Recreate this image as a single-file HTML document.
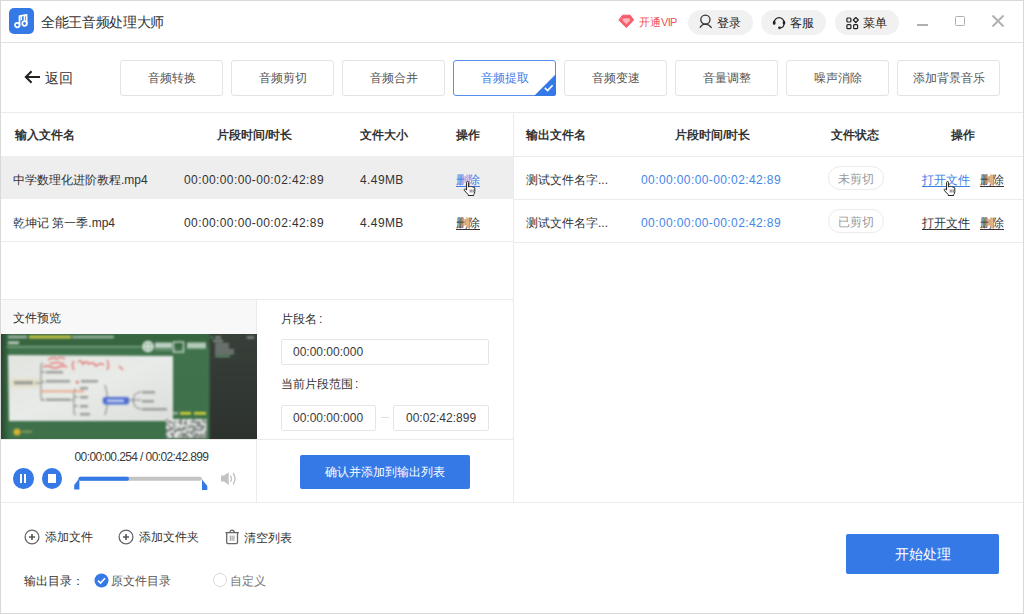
<!DOCTYPE html>
<html><head><meta charset="utf-8">
<style>
*{box-sizing:border-box;margin:0;padding:0}
html,body{width:1024px;height:614px;overflow:hidden;background:#fff}
body{font-family:"Liberation Sans",sans-serif;color:#333;position:relative}
.a{position:absolute}
.t{position:absolute;white-space:nowrap;line-height:16px}
.hl{position:absolute;height:1px;background:#ebebeb}
.vl{position:absolute;width:1px;background:#ebebeb}
.tab{position:absolute;top:60px;width:103px;height:36px;border:1px solid #e3e3e3;border-radius:3px;font-size:12px;color:#555;text-align:center;line-height:35px}
.pill{position:absolute;top:10px;height:25px;border-radius:13px;background:#f1f1f1}
.th{font-weight:bold;font-size:12px;color:#333}
.td{font-size:12px;color:#333}
.inp{position:absolute;height:26px;border:1px solid #e6e6e6;border-radius:2px;font-size:12px;color:#3a3a3a;line-height:25px}
.u{text-decoration:underline;text-underline-offset:2px}
</style></head><body>
<!-- window border -->
<div class="a" style="left:0;top:0;width:1024px;height:614px;border:1px solid #d9d9d9"></div>

<!-- ===== title bar ===== -->
<div class="a" style="left:8.5px;top:8px;width:25.5px;height:26px;border-radius:5px;background:#3579e7"></div>
<svg class="a" style="left:8.5px;top:8px" width="26" height="26" viewBox="0 0 26 26">
  <g fill="none" stroke="#fff" stroke-width="1.7" stroke-linejoin="round">
    <circle cx="8.3" cy="17.1" r="2.3"/>
    <circle cx="15.6" cy="15.5" r="2.3"/>
    <path d="M10.5 17.1V8L17.6 6.8V15.5"/>
    <path d="M12.3 7.7V12.2M15.4 7.2V12.2" stroke-width="1.5"/>
  </g>
</svg>
<div class="t" style="left:41px;top:13.5px;font-size:14px;letter-spacing:-0.35px;color:#333">全能王音频处理大师</div>

<!-- VIP -->
<svg class="a" style="left:618px;top:14px" width="17" height="15" viewBox="0 0 17 15">
  <path d="M4.5 1.2H12.2L15.6 6L8.3 13.6L0.8 6Z" fill="#f65c6c" stroke="#f65c6c" stroke-width="1" stroke-linejoin="round"/>
  <path d="M5.6 4.6H11.2L12.1 6.3L8.4 9.9L4.6 6.3Z" fill="#fdb8c0" stroke="#fca9b2" stroke-width="0.6" stroke-linejoin="round"/>
  <path d="M3.6 3.6L2.6 4.8" stroke="#ffd0d5" stroke-width="0.8"/>
</svg>
<div class="t" style="left:639px;top:14px;font-size:11px;color:#f0525a">开通<span style="letter-spacing:-0.7px">VIP</span></div>

<div class="pill" style="left:688px;width:65px"></div>
<svg class="a" style="left:699px;top:14px" width="15" height="15" viewBox="0 0 15 15">
  <g fill="none" stroke="#333" stroke-width="1.25">
    <circle cx="6.4" cy="5.6" r="4.6"/>
    <path d="M0.9 13.8C2.4 11 4.3 10.1 6.4 10.1S10.5 11 12.6 13.8"/>
  </g>
</svg>
<div class="t" style="left:717px;top:15px;font-size:12px;color:#222">登录</div>

<div class="pill" style="left:761px;width:65px"></div>
<svg class="a" style="left:772px;top:16px" width="14" height="14" viewBox="0 0 14 14">
  <path d="M2.2 6.6A4.9 4.9 0 0 1 12 6.6" fill="none" stroke="#222" stroke-width="1.3"/>
  <rect x="0.9" y="4.7" width="2.6" height="4" rx="1.2" fill="#222"/>
  <rect x="10.8" y="4.7" width="2.4" height="4" rx="1.2" fill="#222"/>
  <path d="M11.9 8.2Q11.7 11.5 8.2 11.8" fill="none" stroke="#222" stroke-width="1.2"/>
  <circle cx="7.5" cy="11.8" r="1.35" fill="#222"/>
</svg>
<div class="t" style="left:790px;top:15px;font-size:12px;color:#222">客服</div>

<div class="pill" style="left:835px;width:64px"></div>
<svg class="a" style="left:846px;top:17px" width="13" height="13" viewBox="0 0 13 13">
  <g fill="none" stroke="#222" stroke-width="1.2">
    <rect x="0.9" y="1" width="4" height="4" rx="0.9"/>
    <path d="M9.8 0.5L12.3 3L9.8 5.5L7.3 3Z" stroke-linejoin="round"/>
    <rect x="0.9" y="7.7" width="4" height="4" rx="0.9"/>
    <rect x="7.6" y="7.7" width="4" height="4" rx="0.9"/>
  </g>
</svg>
<div class="t" style="left:863px;top:15px;font-size:12px;color:#222">菜单</div>

<!-- window controls -->
<div class="a" style="left:917px;top:23.5px;width:11px;height:2px;background:#b0b0b0"></div>
<div class="a" style="left:955px;top:15.5px;width:10px;height:10px;border:1.8px solid #b0b0b0;border-radius:1.5px"></div>
<svg class="a" style="left:991px;top:14px" width="14" height="14" viewBox="0 0 14 14">
  <path d="M1.5 1.5L12.5 12.5M12.5 1.5L1.5 12.5" stroke="#b0b0b0" stroke-width="1.9"/>
</svg>

<div class="hl" style="left:1px;top:42px;width:1022px;background:#e2e2e2"></div>

<!-- ===== toolbar ===== -->
<svg class="a" style="left:24px;top:70px" width="17" height="14" viewBox="0 0 17 14">
  <path d="M16 7H2.2M7.6 1.2L1.8 7L7.6 12.8" fill="none" stroke="#222" stroke-width="2"/>
</svg>
<div class="t" style="left:45px;top:70px;font-size:14px;color:#333">返回</div>

<div class="tab" style="left:120px">音频转换</div>
<div class="tab" style="left:231px">音频剪切</div>
<div class="tab" style="left:342px">音频合并</div>
<div class="tab" style="left:453px;border-color:#5a8eee;color:#3f7de6">音频提取
  <svg class="a" style="right:-1px;bottom:-1px" width="22" height="22" viewBox="0 0 22 22"><path d="M22 0V19.5Q22 22 19.5 22H0Z" fill="#3579e7"/><path d="M10.8 13.9L13.6 16.5L18.6 11.2" fill="none" stroke="#fff" stroke-width="1.6"/></svg>
</div>
<div class="tab" style="left:564px">音频变速</div>
<div class="tab" style="left:675px">音量调整</div>
<div class="tab" style="left:786px">噪声消除</div>
<div class="tab" style="left:897px">添加背景音乐</div>

<div class="hl" style="left:1px;top:112px;width:1022px"></div>

<!-- ===== left table ===== -->
<div class="a" style="left:1px;top:156px;width:512px;height:43px;background:#eeeeee"></div>
<div class="t th" style="left:15px;top:127px">输入文件名</div>
<div class="t th" style="left:217px;top:127px">片段时间/时长</div>
<div class="t th" style="left:360px;top:127px">文件大小</div>
<div class="t th" style="left:456px;top:127px">操作</div>

<div class="t td" style="left:13px;top:171.5px">中学数理化进阶教程.mp4</div>
<div class="t td" style="left:184px;top:171.5px;letter-spacing:0.4px">00:00:00:00-00:02:42:89</div>
<div class="t td" style="left:360px;top:171.5px;letter-spacing:0.4px">4.49MB</div>
<div class="t td u" style="left:456px;top:171.5px;color:#3f7de6">删除</div>

<div class="t td" style="left:13px;top:214.5px">乾坤记 第一季.mp4</div>
<div class="t td" style="left:184px;top:214.5px;letter-spacing:0.4px">00:00:00:00-00:02:42:89</div>
<div class="t td" style="left:360px;top:214.5px;letter-spacing:0.4px">4.49MB</div>
<div class="t td u" style="left:456px;top:214.5px">删除</div>

<div class="hl" style="left:1px;top:241px;width:512px"></div>

<!-- preview -->
<div class="hl" style="left:1px;top:299px;width:512px"></div>
<div class="a" style="left:1px;top:300px;width:255px;height:34px;background:#f8f8f8"></div>
<div class="t" style="left:13px;top:310px;font-size:12px;color:#333">文件预览</div>

<!-- video thumbnail -->
<div class="a" style="left:1px;top:334px;width:256px;height:105px;overflow:hidden;z-index:2"><svg style="display:block;filter:blur(0.9px);margin:-2px" width="260" height="109" viewBox="-2 -2 260 109">
  <defs>
    <filter id="bl" x="-5%" y="-5%" width="110%" height="110%"><feGaussianBlur stdDeviation="0.75"/></filter>
    <linearGradient id="gg" x1="0" y1="0" x2="0" y2="1"><stop offset="0" stop-color="#41744c"/><stop offset="1" stop-color="#3e7049"/></linearGradient>
    <linearGradient id="gl" x1="0" y1="0" x2="1" y2="0"><stop offset="0" stop-color="#22372a"/><stop offset="1" stop-color="#3a6f44"/></linearGradient>
    <linearGradient id="wb" x1="0" y1="0" x2="1" y2="1"><stop offset="0" stop-color="#e2e4e0"/><stop offset="0.5" stop-color="#e9ebe8"/><stop offset="1" stop-color="#dcdedb"/></linearGradient>
    <linearGradient id="dk" x1="0" y1="0" x2="0" y2="1"><stop offset="0" stop-color="#38403a"/><stop offset="1" stop-color="#2c312d"/></linearGradient>
    <pattern id="qr" width="3" height="3" patternUnits="userSpaceOnUse"><rect width="3" height="3" fill="#c9cbc9"/><rect width="1.5" height="1.5" fill="#5a5f5b"/><rect x="1.5" y="1.5" width="1.5" height="1.5" fill="#7d817e"/></pattern>
  </defs>
  <g>
    <rect x="-3" y="-3" width="262" height="112" fill="url(#gg)"/>
    <rect x="0" y="0" width="208" height="13" fill="#36653f"/>
    <rect x="-3" y="-3" width="11" height="112" fill="url(#gl)"/>
    <rect x="6" y="12.3" width="134" height="1" fill="#a9c9b0"/>
    <rect x="7" y="1.8" width="19" height="2.4" fill="#a9bfae"/>
    <rect x="28" y="1.6" width="42" height="2.8" fill="#cfcb49"/>
    <rect x="71" y="1.8" width="42" height="2.4" fill="#a3bba8"/>
    <rect x="7" y="7.5" width="11" height="2.6" fill="#c5d4c8"/>
    <circle cx="147" cy="12.5" r="5" fill="#8fb297" stroke="#e6efe8" stroke-width="1.6"/><path d="M142 12.5H152M147 7.5V17.5" stroke="#e6efe8" stroke-width="1.3"/>
    <rect x="154" y="8.5" width="17" height="5.5" fill="#d5e2d8" opacity=".85"/>
    <rect x="154" y="15" width="17" height="1.5" fill="#a7bfab" opacity=".6"/>
    <rect x="172.5" y="8" width="10" height="10" fill="none" stroke="#d5e2d8" stroke-width="1.3"/>
    <rect x="186" y="8.5" width="19" height="6" fill="#d5e2d8" opacity=".8"/>
    <path d="M7 21L172 22L172 87L8 87Z" fill="url(#wb)"/>
    <rect x="9" y="44" width="29" height="10" fill="#e4e0c8" opacity=".8"/>
    <rect x="13" y="47" width="19" height="3.5" fill="#9a9c98"/>
    <g fill="none" stroke="#6f736f" stroke-width="0.9">
      <path d="M34 49H40M42 29Q40 29 40 31V64Q40 66 42 66M40 38H44M40 48H44M40 66H44"/>
      <path d="M60 66H72M75 55Q73 55 73 57V79Q73 81 75 81M73 63H77M73 72H77"/>
      <path d="M104 51Q109 66 104 81M101 66H102"/>
      <path d="M128 66H133M140 58Q133 58 132 66Q133 75 140 75M133 66H140"/>
    </g>
    <g fill="#9c9e9a">
      <rect x="45" y="37" width="17" height="2.5"/><rect x="45" y="46" width="24" height="2.5"/>
      <rect x="80" y="46" width="17" height="2.5"/>
      <rect x="45" y="64.5" width="24" height="2.5"/>
      <rect x="79" y="53" width="8" height="2.5"/><rect x="79" y="62" width="8" height="2.5"/><rect x="79" y="71" width="8" height="2.5"/><rect x="79" y="79" width="10" height="2.5"/>
      <rect x="141" y="57" width="13" height="2.5"/><rect x="141" y="66" width="12" height="2.5"/><rect x="141" y="74" width="25" height="2.5"/>
    </g>
    <rect x="75" y="47" width="2.5" height="2.5" fill="#e06a6a"/>
    <rect x="40" y="56.2" width="43" height="2.2" fill="#e8a27f" opacity=".8"/>
    <g fill="none" stroke="#e45c5c" stroke-width="1.4" opacity=".85">
      <path d="M47 26Q52 22 56 25Q60 22 64 25M49 30Q55 27 63 30"/>
      <path d="M42 33Q46 31 50 33T58 33T66 33"/>
      <path d="M73 27Q70 31 73 36M77 28Q80 25 82 30Q85 26 88 30Q92 27 95 32Q99 28 103 31M106 26Q109 31 106 36"/>
      <path d="M118 32L122 36"/>
    </g>
    <rect x="102" y="63" width="26" height="7.5" rx="2" fill="#4f6fd0"/>
    <rect x="106" y="65.5" width="17" height="2.5" fill="#c8d2f2"/>
    <rect x="208.5" y="-3" width="50" height="112" fill="url(#dk)"/>
    <g fill="#aab3ad" opacity=".8">
      <rect x="210" y="2.5" width="2" height="2" fill="#5dbf6d"/><rect x="214" y="2.5" width="6" height="2"/>
      <rect x="212" y="6" width="10" height="1.8"/>
      <rect x="214" y="9.5" width="14" height="1.6"/><rect x="214" y="12.5" width="14" height="1.6"/>
      <rect x="214" y="15.5" width="19" height="1.6"/><rect x="214" y="18.5" width="19" height="1.6"/>
      <rect x="214" y="21.5" width="15" height="1.6" fill="#78b98a"/>
      <rect x="246" y="2.5" width="7" height="2"/>
    </g>
    <rect x="208.5" y="23.5" width="46.5" height="0.8" fill="#3d4640"/>
    <rect x="165" y="85" width="20" height="19" fill="#e2e4e2"/><g fill="#7d817e"><rect x="165" y="85" width="2" height="2"/><rect x="165" y="89" width="2" height="2"/><rect x="165" y="95" width="2" height="2"/><rect x="165" y="97" width="2" height="2"/><rect x="165" y="101" width="2" height="2"/><rect x="165" y="103" width="2" height="2"/><rect x="167" y="87" width="2" height="2"/><rect x="167" y="91" width="2" height="2"/><rect x="167" y="95" width="2" height="2"/><rect x="169" y="87" width="2" height="2"/><rect x="169" y="93" width="2" height="2"/><rect x="169" y="95" width="2" height="2"/><rect x="169" y="99" width="2" height="2"/><rect x="171" y="89" width="2" height="2"/><rect x="171" y="93" width="2" height="2"/><rect x="171" y="99" width="2" height="2"/><rect x="171" y="101" width="2" height="2"/><rect x="171" y="103" width="2" height="2"/><rect x="173" y="87" width="2" height="2"/><rect x="173" y="91" width="2" height="2"/><rect x="173" y="95" width="2" height="2"/><rect x="173" y="97" width="2" height="2"/><rect x="175" y="95" width="2" height="2"/><rect x="177" y="87" width="2" height="2"/><rect x="177" y="93" width="2" height="2"/><rect x="177" y="95" width="2" height="2"/><rect x="177" y="101" width="2" height="2"/><rect x="179" y="85" width="2" height="2"/><rect x="179" y="87" width="2" height="2"/><rect x="179" y="89" width="2" height="2"/><rect x="179" y="95" width="2" height="2"/><rect x="179" y="99" width="2" height="2"/><rect x="179" y="103" width="2" height="2"/><rect x="181" y="93" width="2" height="2"/><rect x="181" y="95" width="2" height="2"/><rect x="181" y="99" width="2" height="2"/><rect x="181" y="101" width="2" height="2"/><rect x="181" y="103" width="2" height="2"/><rect x="183" y="87" width="2" height="2"/><rect x="183" y="89" width="2" height="2"/><rect x="183" y="93" width="2" height="2"/><rect x="183" y="99" width="2" height="2"/><rect x="183" y="101" width="2" height="2"/></g>
    <rect x="185.5" y="85" width="20" height="19" fill="#e2e4e2"/><g fill="#7d817e"><rect x="185.5" y="97" width="2" height="2"/><rect x="185.5" y="101" width="2" height="2"/><rect x="185.5" y="103" width="2" height="2"/><rect x="187.5" y="91" width="2" height="2"/><rect x="187.5" y="93" width="2" height="2"/><rect x="187.5" y="97" width="2" height="2"/><rect x="187.5" y="103" width="2" height="2"/><rect x="189.5" y="87" width="2" height="2"/><rect x="189.5" y="91" width="2" height="2"/><rect x="189.5" y="97" width="2" height="2"/><rect x="189.5" y="99" width="2" height="2"/><rect x="191.5" y="85" width="2" height="2"/><rect x="191.5" y="87" width="2" height="2"/><rect x="191.5" y="91" width="2" height="2"/><rect x="191.5" y="93" width="2" height="2"/><rect x="191.5" y="95" width="2" height="2"/><rect x="191.5" y="97" width="2" height="2"/><rect x="191.5" y="101" width="2" height="2"/><rect x="191.5" y="103" width="2" height="2"/><rect x="193.5" y="87" width="2" height="2"/><rect x="193.5" y="93" width="2" height="2"/><rect x="193.5" y="95" width="2" height="2"/><rect x="193.5" y="99" width="2" height="2"/><rect x="193.5" y="101" width="2" height="2"/><rect x="193.5" y="103" width="2" height="2"/><rect x="195.5" y="87" width="2" height="2"/><rect x="195.5" y="89" width="2" height="2"/><rect x="195.5" y="91" width="2" height="2"/><rect x="195.5" y="95" width="2" height="2"/><rect x="195.5" y="99" width="2" height="2"/><rect x="195.5" y="101" width="2" height="2"/><rect x="197.5" y="87" width="2" height="2"/><rect x="197.5" y="89" width="2" height="2"/><rect x="197.5" y="91" width="2" height="2"/><rect x="197.5" y="95" width="2" height="2"/><rect x="197.5" y="101" width="2" height="2"/><rect x="197.5" y="103" width="2" height="2"/><rect x="199.5" y="91" width="2" height="2"/><rect x="199.5" y="93" width="2" height="2"/><rect x="199.5" y="95" width="2" height="2"/><rect x="199.5" y="99" width="2" height="2"/><rect x="199.5" y="101" width="2" height="2"/><rect x="199.5" y="103" width="2" height="2"/><rect x="201.5" y="85" width="2" height="2"/><rect x="201.5" y="87" width="2" height="2"/><rect x="201.5" y="91" width="2" height="2"/><rect x="201.5" y="93" width="2" height="2"/><rect x="201.5" y="101" width="2" height="2"/><rect x="203.5" y="87" width="2" height="2"/><rect x="203.5" y="97" width="2" height="2"/><rect x="203.5" y="99" width="2" height="2"/><rect x="203.5" y="101" width="2" height="2"/><rect x="203.5" y="103" width="2" height="2"/></g>
    <rect x="179" y="78" width="11" height="2.6" fill="#d6d43a"/>
    <rect x="193" y="78" width="12" height="2.6" fill="#d6d43a"/>
    <rect x="172" y="78" width="5" height="2.4" fill="#9fb7a4"/>
    <circle cx="16" cy="98" r="3.6" fill="#d6b232"/>
    <rect x="21" y="96.5" width="10" height="2.4" fill="#7f9a5a"/>
  </g>
</svg></div>
<!-- player controls -->
<div class="t" style="left:74.5px;top:448.5px;font-size:12px;color:#3a3a3a;letter-spacing:-0.6px">00:00:00.254 / 00:02:42.899</div>
<div class="a" style="left:13px;top:468px;width:20.5px;height:20.5px;border-radius:50%;background:#3579e7"></div>
<div class="a" style="left:19.5px;top:474px;width:2.6px;height:8.8px;background:#fff"></div>
<div class="a" style="left:23.9px;top:474px;width:2.6px;height:8.8px;background:#fff"></div>
<div class="a" style="left:42px;top:468px;width:20.2px;height:20.5px;border-radius:50%;background:#3579e7"></div>
<div class="a" style="left:47.8px;top:474px;width:8.6px;height:8.8px;background:#fff"></div>
<svg class="a" style="left:70px;top:470px" width="140" height="24" viewBox="0 0 140 24">
  <rect x="8.5" y="6.7" width="123.5" height="4" rx="2" fill="#c4c4c4"/>
  <rect x="8.5" y="6.7" width="50.5" height="4" rx="2" fill="#3579e7"/>
  <path d="M9.4 8.2L4.2 15V19.6H9.4Z" fill="#3579e7"/>
  <path d="M132 9.5L137.3 16V20H132Z" fill="#3579e7"/>
</svg>
<svg class="a" style="left:220px;top:471px" width="18" height="15" viewBox="0 0 18 15">
  <path d="M1 4.4H4L8.7 1.3V14L4 10.6H1Z" fill="#c2c2c2"/>
  <path d="M10.7 5Q12.2 7.6 10.7 10.2M13.4 2.3Q16.4 7.6 13.4 12.9" fill="none" stroke="#c2c2c2" stroke-width="1.4" stroke-linecap="round"/>
</svg>
<div class="vl" style="left:256px;top:299px;height:203px"></div>
<div class="hl" style="left:1px;top:439px;width:512px"></div>

<!-- form -->
<div class="t" style="left:281px;top:311px;font-size:12px;color:#333">片段名<span style="margin-left:2px">:</span></div>
<div class="inp" style="left:281px;top:339px;width:208px;padding-left:11px">00:00:00:000</div>
<div class="t" style="left:281px;top:376px;font-size:12px;color:#333">当前片段范围<span style="margin-left:2px">:</span></div>
<div class="inp" style="left:281px;top:405px;width:95px;padding-left:11px">00:00:00:000</div>
<div class="a" style="left:380.5px;top:417px;width:8.5px;height:1px;background:#dedede"></div>
<div class="inp" style="left:393px;top:405px;width:96px;padding-left:12px">00:02:42:899</div>

<div class="a" style="left:300px;top:455px;width:170px;height:34px;background:#3579e7;border-radius:2px;color:#fff;font-size:12px;text-align:center;line-height:34px">确认并添加到输出列表</div>

<div class="vl" style="left:513px;top:113px;height:389px"></div>

<!-- ===== right table ===== -->
<div class="t th" style="left:526px;top:127px">输出文件名</div>
<div class="t th" style="left:675px;top:127px">片段时间/时长</div>
<div class="t th" style="left:831px;top:127px">文件状态</div>
<div class="t th" style="left:951px;top:127px">操作</div>
<div class="hl" style="left:514px;top:156px;width:509px"></div>

<div class="t td" style="left:526px;top:171.5px">测试文件名字...</div>
<div class="t td" style="left:641px;top:171.5px;color:#4586e8;letter-spacing:0.4px">00:00:00:00-00:02:42:89</div>
<div class="a" style="left:828px;top:166px;width:56px;height:24px;border:1px solid #ebebeb;border-radius:12px;font-size:12px;color:#999;text-align:center;line-height:25px">未剪切</div>
<div class="t td u" style="left:922px;top:171.5px;color:#3f7de6">打开文件</div>
<div class="t td u" style="left:980px;top:171.5px">删除</div>
<div class="hl" style="left:514px;top:199px;width:509px"></div>

<div class="t td" style="left:526px;top:214.5px">测试文件名字...</div>
<div class="t td" style="left:641px;top:214.5px;color:#4586e8;letter-spacing:0.4px">00:00:00:00-00:02:42:89</div>
<div class="a" style="left:828px;top:209px;width:56px;height:24px;border:1px solid #ebebeb;border-radius:12px;font-size:12px;color:#999;text-align:center;line-height:25px">已剪切</div>
<div class="t td u" style="left:922px;top:214.5px">打开文件</div>
<div class="t td u" style="left:980px;top:214.5px">删除</div>
<div class="hl" style="left:514px;top:242px;width:509px"></div>

<svg class="a" style="left:463px;top:181px" width="14" height="15" viewBox="0 0 14 15"><path d="M3.6 1.6Q3.6 0.5 4.6 0.5Q5.6 0.5 5.6 1.6V6Q6.2 5.3 7.2 5.6Q7.6 5.2 8.6 5.6Q9.3 5.5 9.9 6.2Q11.2 5.8 11.8 6.9V10.6Q11.8 12.4 10.7 13.5V14.5H5.2V13.6Q3.7 12.2 1.5 9.6Q0.7 8.6 1.6 8.1Q2.4 7.7 3.6 9Z" fill="#fff" stroke="#222" stroke-width="1"/><path d="M7.2 8.5V11.5M8.8 8.5V11.5M10.3 8.5V11.5" stroke="#444" stroke-width="0.7"/></svg>
<svg class="a" style="left:943px;top:181px" width="14" height="15" viewBox="0 0 14 15"><path d="M3.6 1.6Q3.6 0.5 4.6 0.5Q5.6 0.5 5.6 1.6V6Q6.2 5.3 7.2 5.6Q7.6 5.2 8.6 5.6Q9.3 5.5 9.9 6.2Q11.2 5.8 11.8 6.9V10.6Q11.8 12.4 10.7 13.5V14.5H5.2V13.6Q3.7 12.2 1.5 9.6Q0.7 8.6 1.6 8.1Q2.4 7.7 3.6 9Z" fill="#fff" stroke="#222" stroke-width="1"/><path d="M7.2 8.5V11.5M8.8 8.5V11.5M10.3 8.5V11.5" stroke="#444" stroke-width="0.7"/></svg>
<div class="hl" style="left:1px;top:502px;width:1022px"></div>

<!-- ===== bottom ===== -->
<svg class="a" style="left:24px;top:529px" width="16" height="16" viewBox="0 0 16 16">
  <g fill="none" stroke="#666" stroke-width="1.3"><circle cx="8" cy="8" r="6.9"/><path d="M8 5V11M5 8H11" stroke="#555" stroke-width="1.6"/></g>
</svg>
<div class="t" style="left:45px;top:529px;font-size:12px;color:#333">添加文件</div>
<svg class="a" style="left:118px;top:529px" width="16" height="16" viewBox="0 0 16 16">
  <g fill="none" stroke="#666" stroke-width="1.3"><circle cx="8" cy="8" r="6.9"/><path d="M8 5V11M5 8H11" stroke="#555" stroke-width="1.6"/></g>
</svg>
<div class="t" style="left:139px;top:529px;font-size:12px;color:#333">添加文件夹</div>
<svg class="a" style="left:225px;top:529px" width="15" height="16" viewBox="0 0 15 16">
  <g fill="none" stroke="#666" stroke-width="1.3">
    <path d="M0.4 3.6H13.8"/>
    <path d="M5 3.4Q5 1.1 7.1 1.1Q9.2 1.1 9.2 3.4"/>
    <path d="M1.7 3.6V13.5Q1.7 14.6 2.8 14.6H11.4Q12.5 14.6 12.5 13.5V3.6"/>
    <path d="M5.3 6.6V11.8M7.1 6.6V11.8M8.9 6.6V11.8" stroke="#888" stroke-width="0.9"/>
  </g>
</svg>
<div class="t" style="left:244px;top:529.5px;font-size:12px;color:#333">清空列表</div>

<div class="t" style="left:24px;top:573px;font-size:12px;color:#333">输出目录：</div>
<svg class="a" style="left:94px;top:573px" width="15" height="15" viewBox="0 0 15 15">
  <circle cx="7.5" cy="7.5" r="7" fill="#3579e7"/>
  <path d="M4 7.6L6.5 10L11 5.3" fill="none" stroke="#fff" stroke-width="1.6"/>
</svg>
<div class="t" style="left:111px;top:573px;font-size:12px;color:#555">原文件目录</div>
<div class="a" style="left:213px;top:573px;width:14px;height:14px;border-radius:50%;border:1px solid #d8d8d8"></div>
<div class="t" style="left:230px;top:573px;font-size:12px;color:#777">自定义</div>

<div class="a" style="left:846px;top:534px;width:153px;height:40px;background:#3579e7;border-radius:2px;color:#fff;font-size:14px;text-align:center;line-height:41px;font-size:14px">开始处理</div>

</body></html>
